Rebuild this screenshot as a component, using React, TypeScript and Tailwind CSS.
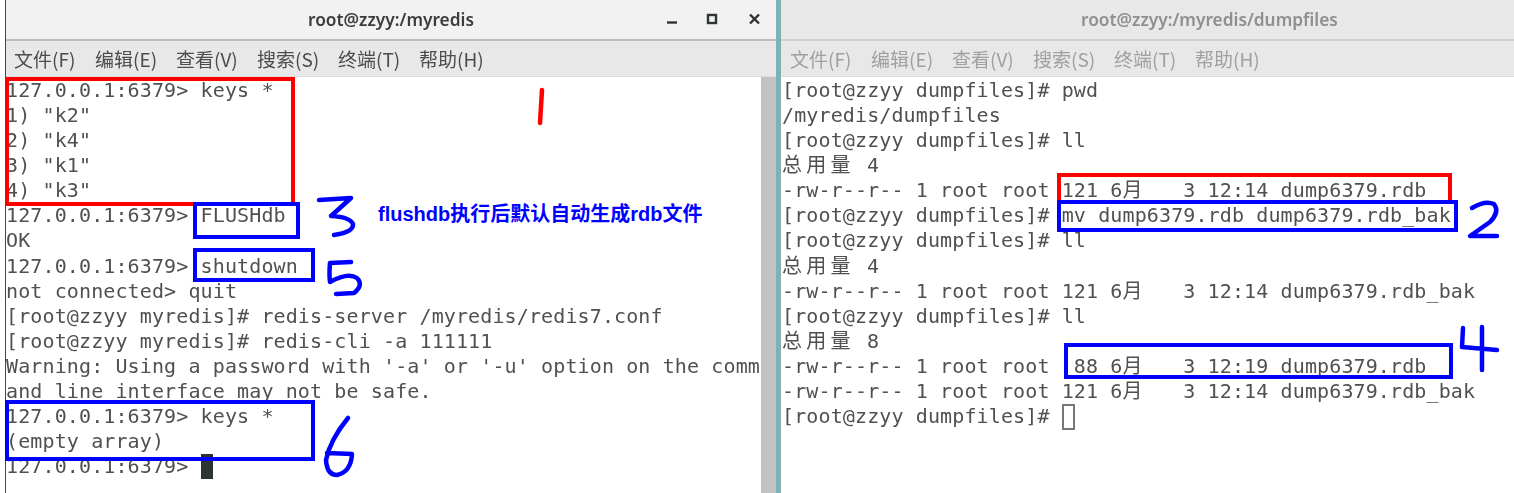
const menus = [
  ["文件", "(F)"],
  ["编辑", "(E)"],
  ["查看", "(V)"],
  ["搜索", "(S)"],
  ["终端", "(T)"],
  ["帮助", "(H)"],
];

// CJK glyphs take two terminal cells
function W({ children }: { children: string }) {
  return <span className="inline-block w-[24.3px]">{children}</span>;
}

function Line({ children }: { children?: React.ReactNode }) {
  return <div className="h-[25.08px] leading-[25.08px] whitespace-pre">{children}</div>;
}

function Menu({ dim }: { dim?: boolean }) {
  return (
    <div
      className={`flex h-[36px] items-center gap-[20px] border-b border-[#dcdcdc] bg-[#e8e8e8] text-[19px] leading-none blur-[0.3px] ${
        dim ? "pl-[9px] text-[#a0a0a0]" : "pl-[8px] text-[#4c4c4c]"
      }`}
    >
      {menus.map(([zh, key]) => (
        <span key={key} className="w-[61px] text-center whitespace-nowrap">
          {zh}
          {key}
        </span>
      ))}
    </div>
  );
}

function LeftTerminal() {
  return (
    <div className="relative min-w-0 flex-1 overflow-hidden bg-white pt-[1px] text-[20px] tracking-[0.12px] text-[#505050] blur-[0.35px]">
      <Line>127.0.0.1:6379&gt; keys *</Line>
      <Line>1) "k2"</Line>
      <Line>2) "k4"</Line>
      <Line>3) "k1"</Line>
      <Line>4) "k3"</Line>
      <Line>127.0.0.1:6379&gt; FLUSHdb</Line>
      <Line>OK</Line>
      <Line>127.0.0.1:6379&gt; shutdown</Line>
      <Line>not connected&gt; quit</Line>
      <Line>[root@zzyy myredis]# redis-server /myredis/redis7.conf</Line>
      <Line>[root@zzyy myredis]# redis-cli -a 111111</Line>
      <Line>Warning: Using a password with '-a' or '-u' option on the comm</Line>
      <Line>and line interface may not be safe.</Line>
      <Line>127.0.0.1:6379&gt; keys *</Line>
      <Line>(empty array)</Line>
      <Line>
        127.0.0.1:6379&gt; <span className="inline-block h-[25px] w-[12px] align-top bg-[#2e3436]" />
      </Line>
    </div>
  );
}

function RightTerminal() {
  return (
    <div className="flex-1 overflow-hidden bg-white pt-[1px] pl-[1px] text-[20px] tracking-[0.12px] text-[#505050] blur-[0.35px]">
      <Line>[root@zzyy dumpfiles]# pwd</Line>
      <Line>/myredis/dumpfiles</Line>
      <Line>[root@zzyy dumpfiles]# ll</Line>
      <Line>
        <W>总</W>
        <W>用</W>
        <W>量</W> 4
      </Line>
      <Line>
        -rw-r--r-- 1 root root 121 6<W>月</W>   3 12:14 dump6379.rdb
      </Line>
      <Line>[root@zzyy dumpfiles]# mv dump6379.rdb dump6379.rdb_bak</Line>
      <Line>[root@zzyy dumpfiles]# ll</Line>
      <Line>
        <W>总</W>
        <W>用</W>
        <W>量</W> 4
      </Line>
      <Line>
        -rw-r--r-- 1 root root 121 6<W>月</W>   3 12:14 dump6379.rdb_bak
      </Line>
      <Line>[root@zzyy dumpfiles]# ll</Line>
      <Line>
        <W>总</W>
        <W>用</W>
        <W>量</W> 8
      </Line>
      <Line>
        -rw-r--r-- 1 root root  88 6<W>月</W>   3 12:19 dump6379.rdb
      </Line>
      <Line>
        -rw-r--r-- 1 root root 121 6<W>月</W>   3 12:14 dump6379.rdb_bak
      </Line>
      <Line>
        [root@zzyy dumpfiles]# <span className="inline-block h-[26px] w-[13px] align-top border-2 border-[#777]" />
      </Line>
    </div>
  );
}

function Controls() {
  return (
    <svg className="absolute top-0 left-[649px]" width="115" height="41" fill="none" stroke="#2e3436" strokeWidth="2.4">
      <path d="M12 22.5h10" />
      <rect x="53" y="15" width="8" height="8" />
      <path d="M95 14.5l9 9M104 14.5l-9 9" />
    </svg>
  );
}

export default function App() {
  return (
    <div
      className="relative flex h-[493px] w-[1514px] overflow-hidden bg-white"
      style={{ fontFamily: '"DejaVu Sans Mono", "Noto Sans CJK SC", monospace' }}
    >
      {/* focused window */}
      <div className="flex h-full w-[776px] shrink-0 flex-col pl-[5px]">
        <div className="flex h-full flex-col border-l border-[#2f4f5f]">
          <div className="relative flex h-[41px] shrink-0 items-center justify-center border-b-2 border-[#bdbdbd] bg-[#f2f2f2] font-['Noto_Sans','Noto_Sans_CJK_SC',sans-serif] text-[17.3px] font-semibold text-[#3c3c3c] blur-[0.3px]">
            <span>root@zzyy:/myredis</span>
            <Controls />
          </div>
          <div className="font-['Noto_Sans_CJK_SC','Noto_Sans',sans-serif]">
            <Menu />
          </div>
          <div className="flex min-h-0 flex-1">
            <LeftTerminal />
            <div className="w-[15px] shrink-0 bg-[#c1c3c2]" />
          </div>
        </div>
      </div>

      <div className="h-full w-[5px] shrink-0 bg-[#7fb2b3]" />

      {/* unfocused window */}
      <div className="flex h-full min-w-0 flex-1 flex-col">
        <div className="flex h-[41px] shrink-0 items-center border-b-2 border-[#cfcfcf] bg-[#e8e8e8] pl-[300px] font-['Noto_Sans','Noto_Sans_CJK_SC',sans-serif] text-[17.3px] font-semibold text-[#8f8f8f] blur-[0.3px]">
          root@zzyy:/myredis/dumpfiles
        </div>
        <div className="font-['Noto_Sans_CJK_SC','Noto_Sans',sans-serif]">
          <Menu dim />
        </div>
        <RightTerminal />
      </div>

      {/* annotation boxes */}
      <div className="absolute top-[77px] left-[5px] h-[129px] w-[290px] border-4 border-[#ff0000]" />
      <div className="absolute top-[173px] left-[1057px] h-[28px] w-[395px] border-x-4 border-t-4 border-[#ff0000]" />
      <div className="absolute top-[202px] left-[193px] h-[37px] w-[107px] border-4 border-[#0000ff]" />
      <div className="absolute top-[248px] left-[193px] h-[34px] w-[122px] border-4 border-[#0000ff]" />
      <div className="absolute top-[400px] left-[5px] h-[61px] w-[310px] border-4 border-[#0000ff]" />
      <div className="absolute top-[200px] left-[1057px] h-[32px] w-[401px] border-4 border-[#0000ff]" />
      <div className="absolute top-[343px] left-[1064px] h-[36px] w-[389px] border-4 border-[#0000ff]" />

      {/* hand written numbers */}
      <svg className="absolute inset-0" width="1514" height="493" fill="none" strokeWidth="4.5" strokeLinecap="round" strokeLinejoin="round">
        <path stroke="#ff0000" d="M542 90L540 123" />
        <g stroke="#0000ff">
          <path d="M319 200L351 198L331 216Q350 217 353 224Q354 232 334 235" />
          <path d="M351 262L330 263Q329 275 330 282Q348 272 357 278Q364 285 354 293L336 294" />
          <path d="M348 418Q330 440 326 460Q327 475 337 475Q351 472 352 454L327 453" />
          <path d="M1472 208Q1485 200 1494 204Q1500 212 1490 222L1470 236L1497 236" />
          <path d="M1463 328L1462 347L1497 350M1482 327L1482 370" />
        </g>
      </svg>

      <span className="absolute top-[201px] left-[378px] font-['Liberation_Sans','Noto_Sans_CJK_SC',sans-serif] text-[20px] leading-[26px] font-bold whitespace-nowrap text-[#0000ff]">
        flushdb执行后默认自动生成rdb文件
      </span>
    </div>
  );
}
